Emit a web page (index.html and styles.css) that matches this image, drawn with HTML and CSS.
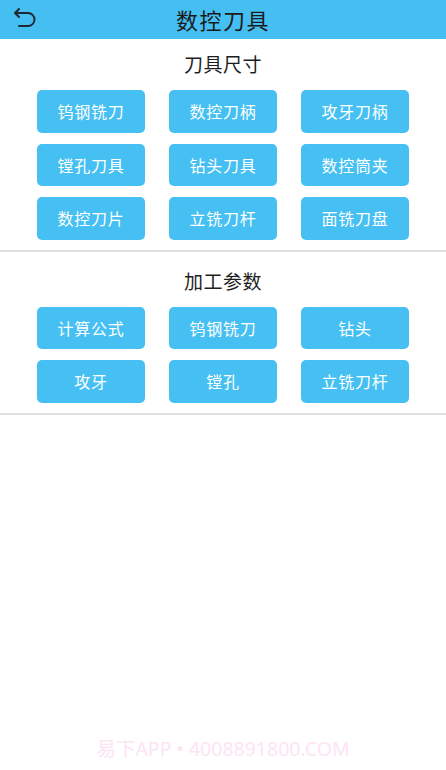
FILE: index.html
```html
<!DOCTYPE html>
<html lang="zh">
<head>
<meta charset="utf-8">
<title>数控刀具</title>
<link rel="stylesheet" href="styles.css">
</head>
<body>
<div class="page">
  <header class="topbar">
    <span class="back">
      <svg width="26" height="26" viewBox="0 0 26 26" fill="none" stroke="#1d2a33" stroke-width="2" stroke-linecap="round" stroke-linejoin="round">
        <path d="M6 3 L2 7 L6 11"/>
        <path d="M2.5 7 H15 A6.5 6.5 0 0 1 15 20 H6"/>
      </svg>
    </span>
    <h1 class="title">数控刀具</h1>
  </header>

  <section class="section">
    <h2 class="section-title">刀具尺寸</h2>
    <div class="grid">
      <div class="btn">钨钢铣刀</div>
      <div class="btn">数控刀柄</div>
      <div class="btn">攻牙刀柄</div>
      <div class="btn">镗孔刀具</div>
      <div class="btn">钻头刀具</div>
      <div class="btn">数控筒夹</div>
      <div class="btn">数控刀片</div>
      <div class="btn">立铣刀杆</div>
      <div class="btn">面铣刀盘</div>
    </div>
  </section>

  <section class="section second">
    <h2 class="section-title">加工参数</h2>
    <div class="grid">
      <div class="btn">计算公式</div>
      <div class="btn">钨钢铣刀</div>
      <div class="btn">钻头</div>
      <div class="btn">攻牙</div>
      <div class="btn">镗孔</div>
      <div class="btn">立铣刀杆</div>
    </div>
  </section>

  <div class="watermark">易下APP • 4008891800.COM</div>
</div>
</body>
</html>
```
FILE: styles.css
```css
* { box-sizing: border-box; }
html, body {
  margin: 0;
  padding: 0;
  background: #ffffff;
}
body {
  font-family: "Noto Sans CJK SC", "Noto Sans", sans-serif;
  width: 446px;
  height: 770px;
  overflow: hidden;
}
.page {
  position: relative;
  width: 446px;
  height: 770px;
  background: #ffffff;
}
.topbar {
  position: relative;
  height: 39px;
  background: #45bff1;
  display: flex;
  align-items: center;
  justify-content: center;
}
.back {
  position: absolute;
  left: 13px;
  top: 6px;
  width: 26px;
  height: 26px;
}
.back svg { display: block; }
.title {
  margin: 0;
  font-size: 22px;
  font-weight: 400;
  color: #1b1b1b;
  line-height: 39px;
  letter-spacing: 1.5px;
}
.section {
  border-bottom: 2px solid #e0e0e0;
  padding-bottom: 10px;
}
.section-title {
  margin: 0;
  height: 51px;
  line-height: 49px;
  text-align: center;
  font-size: 19px;
  font-weight: 400;
  color: #1e1e1e;
  letter-spacing: 0.5px;
}
.second .section-title {
  margin-top: 3px;
  height: 52px;
  line-height: 52px;
}
.grid {
  display: grid;
  grid-template-columns: repeat(3, 108px);
  column-gap: 24px;
  row-gap: 11px;
  justify-content: center;
}
.btn {
  height: 42.5px;
  background: #46bff2;
  border-radius: 5px;
  color: #ffffff;
  font-size: 16px;
  display: flex;
  align-items: center;
  justify-content: center;
  letter-spacing: 0.8px;
}
.watermark {
  position: absolute;
  left: 0;
  right: 0;
  top: 733px;
  text-align: center;
  font-family: "Noto Sans", "Noto Sans CJK SC", sans-serif;
  font-size: 19.5px;
  color: #fde4f4;
}
```
